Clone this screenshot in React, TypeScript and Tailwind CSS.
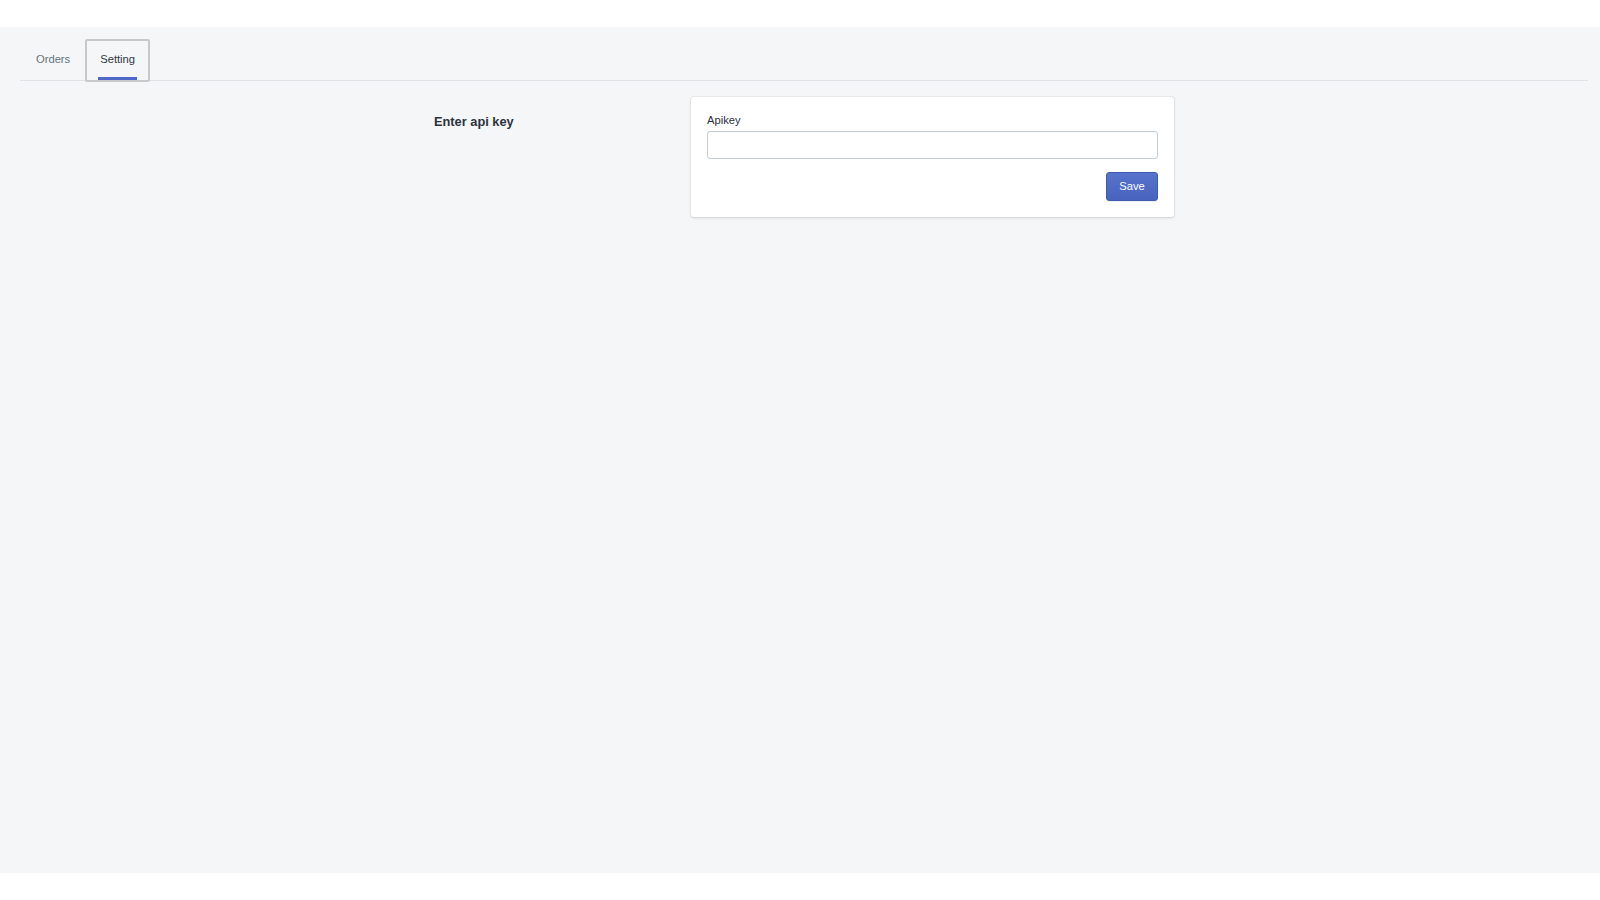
import React, { useState } from "react";

export default function App() {
  const [tab, setTab] = useState("setting");
  const [apiKey, setApiKey] = useState("");

  return (
    <div
      className="bg-white py-[27px]"
      style={{ fontFamily: '"Liberation Sans", Arial, sans-serif' }}
    >
      <div className="bg-[#f4f6f8] h-[846px] pl-5 pr-3 pt-3">
        {/* Tabs */}
        <div className="flex border-b border-[#dfe3e8] h-[42px]">
          <button
            type="button"
            onClick={() => setTab("orders")}
            className="h-[41px] px-4 text-[11.2px] text-[#637381]"
          >
            Orders
          </button>
          <button
            type="button"
            onClick={() => setTab("setting")}
            className="-ml-px h-[43px] px-[11px] border-2 border-[#c6c8ca] rounded-[2px] text-[11.2px] text-[#2f3842] flex"
          >
            <span className="h-full px-[2px] pt-[10px] border-b-[3px] border-[#4d68c6] leading-[16px]">
              Setting
            </span>
          </button>
        </div>

        {/* Annotated section */}
        {tab === "setting" && (
          <div className="flex justify-center pt-4">
            <div className="w-[257px] pt-[15px]">
              <h2 className="text-[12.8px] leading-[19px] font-bold text-[#2a333d]">
                Enter api key
              </h2>
            </div>
            <div className="w-[483px] bg-white rounded-[3px] shadow-[0_0_0_1px_rgba(63,63,68,0.05),0_1px_3px_0_rgba(63,63,68,0.15)] p-4">
              <label className="block text-[11.2px] leading-[14px] text-[#2a333d] mb-[4px]">
                Apikey
              </label>
              <input
                type="text"
                value={apiKey}
                onChange={(e) => setApiKey(e.target.value)}
                className="block w-full h-[28px] border border-[#c4cdd5] rounded-[3px] bg-white px-2 text-[11.2px] outline-none shadow-[inset_0_1px_0_0_rgba(99,115,129,0.05)]"
              />
              <div className="flex justify-end mt-[13px]">
                <button
                  type="button"
                  className="h-[29px] w-[52px] rounded-[3px] border border-[#3f5ab0] bg-gradient-to-b from-[#5672cb] to-[#4864bf] text-white text-[11.2px] shadow-[0_1px_0_0_rgba(22,29,37,0.05)]"
                >
                  Save
                </button>
              </div>
            </div>
          </div>
        )}
      </div>
    </div>
  );
}
